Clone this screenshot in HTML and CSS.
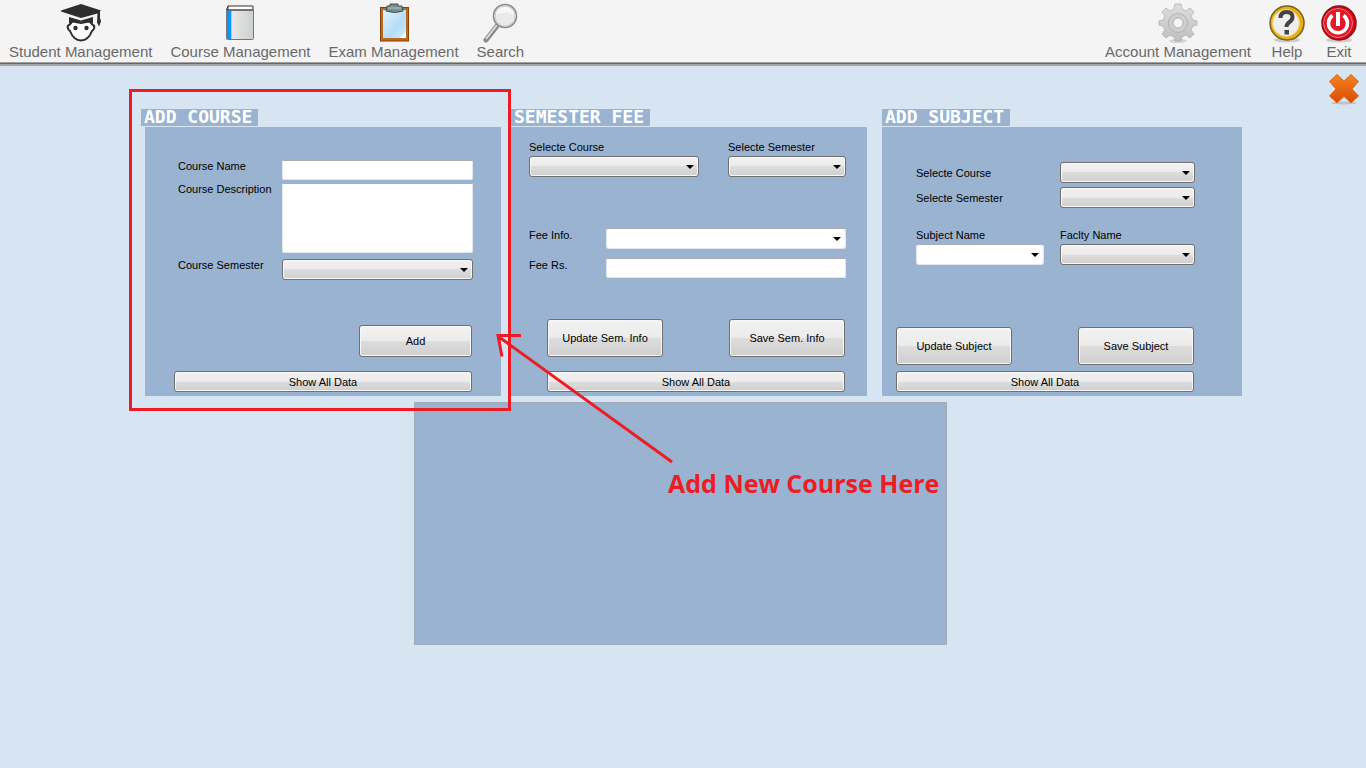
FILE: index.html
```html
<!DOCTYPE html>
<html lang="en">
<head>
<meta charset="utf-8">
<title>Course Management</title>
<link rel="stylesheet" href="styles.css">
</head>
<body>
<header class="toolbar">
  <nav class="tools">
    <button class="tool" type="button">
      <svg class="icon" viewBox="0 0 40 40">
        <path d="M0 7.500 20 1l20 6.500-1 1v6l1 4-2 5-2-4 .5-9L20 15 0 8.500z" fill="#2e2e2e"/>
        <path d="M8 14l12 3.500L32 14v6l-12-1.500L8 20z" fill="#2e2e2e"/>
        <path d="M12 18.500l8 1.500 8-1.500c2 0 2 3 4 3.500 2.500 1 1 5-1 6-2 5-6 9.500-11 9.500S11 33 9 28c-2-1-3.500-5-1-6 2-.5 2-3.500 4-3.500z" fill="#fff" stroke="#2e2e2e" stroke-width="2"/>
        <path d="M8 15v6l4-2.500 8 1.500 8-1.500 4 2.500v-6l-12 3.500z" fill="#2e2e2e"/>
        <circle cx="14.500" cy="25" r="2.200" fill="#2e2e2e"/><circle cx="25.500" cy="25" r="2.200" fill="#2e2e2e"/>
      </svg>
      <span>Student Management</span>
    </button>
    <button class="tool" type="button">
      <svg class="icon" viewBox="0 0 40 40">
        <defs><linearGradient id="cover"><stop offset="0" stop-color="#eee"/><stop offset="1" stop-color="#ccd0cf"/></linearGradient></defs>
        <path d="M8 3h25v6H8z" fill="#fff" stroke="#333"/>
        <rect x="6.500" y="7" width="27" height="29.500" rx="1" fill="url(#cover)" stroke="#777"/>
        <rect x="7" y="7.500" width="4" height="28.500" fill="#0a96fa"/>
        <path d="M11.500 8v28" stroke="#9bd2fa"/>
        <path d="M8 3 6.500 7 33 7" fill="none" stroke="#333"/>
      </svg>
      <span>Course Management</span>
    </button>
    <button class="tool" type="button">
      <svg class="icon" viewBox="0 0 40 40">
        <defs><linearGradient id="sheet" x2="1" y2="1"><stop offset="0" stop-color="#e3f3fe"/><stop offset=".6" stop-color="#b5dcf7"/><stop offset="1" stop-color="#d4ecfb"/></linearGradient></defs>
        <rect x="6.500" y="4.500" width="28" height="33.500" fill="#b96a1e" stroke="#80400b"/>
        <rect x="9" y="7" width="23" height="28" fill="url(#sheet)"/>
        <path d="M26 35l6-7v7z" fill="#fff"/>
        <path d="M16 3V1h8v2h4l1 5q-8 3-17 0l1-5z" fill="#78908d" stroke="#3d5352"/>
        <path d="M14 5h13" stroke="#b5c5c2"/>
      </svg>
      <span>Exam Management</span>
    </button>
    <button class="tool" type="button">
      <svg class="icon" viewBox="0 0 40 40">
        <path d="M6 37 17 23" stroke="#888" stroke-width="5" stroke-linecap="round"/>
        <path d="M6 36 17 22" stroke="#ddd" stroke-width="2"/>
        <circle cx="25" cy="13" r="11.500" fill="#e9e9e9" stroke="#888" stroke-width="1.500"/>
        <circle cx="25" cy="13" r="10" fill="none" stroke="#ccc"/>
        <path d="M16 12q9-5 18 0-1-8-9-8t-9 8z" fill="#f8f8f8"/>
      </svg>
      <span>Search</span>
    </button>
  </nav>
  <nav class="tools tools-end">
    <button class="tool" type="button">
      <svg class="icon" viewBox="0 0 40 40">
        <defs><linearGradient id="gear" x2="0" y2="1"><stop offset="0" stop-color="#dedede"/><stop offset="1" stop-color="#c0c0c0"/></linearGradient></defs>
        <ellipse cx="20" cy="38" rx="9" ry="2" fill="#d5d5d5"/>
        <path d="M17 1h6l1 5 4 2 4-3 4 4-3 4 2 4 4 1v4l-4 1-2 4 3 4-4 4-4-3-4 2-1 4h-6l-1-4-4-2-4 3-4-4 3-4-2-4-4-1v-4l4-1 2-4-3-4 4-4 4 3 4-2z" fill="url(#gear)" stroke="#aaa" stroke-width=".7"/>
        <circle cx="20" cy="20" r="9.500" fill="#cfcfcf" stroke="#b2b2b2"/>
        <circle cx="20" cy="20" r="5" fill="#f5f5f5" stroke="#999" stroke-width=".7"/>
      </svg>
      <span>Account Management</span>
    </button>
    <div class="tools-pair">
      <button class="tool" type="button">
        <svg class="icon" viewBox="0 0 40 40">
          <ellipse cx="20" cy="37" rx="13" ry="2.500" fill="#ccc"/>
          <circle cx="20" cy="20" r="17" fill="#e9ad17" stroke="#77601c" stroke-width="1.500"/>
          <circle cx="19" cy="20" r="13.500" fill="#eee" stroke="#fad35c"/>
          <path d="M13.500 15q0-6 6-6t6 5q0 3-3 5t-3 5" fill="none" stroke="#444" stroke-width="4"/>
          <rect x="17.500" y="27" width="4.500" height="4.500" fill="#444"/>
        </svg>
        <span>Help</span>
      </button>
      <button class="tool" type="button">
        <svg class="icon" viewBox="0 0 40 40">
          <ellipse cx="20" cy="37" rx="13" ry="2.500" fill="#ccc"/>
          <circle cx="20" cy="20" r="17" fill="#d90b18" stroke="#8f0d14" stroke-width="1.500"/>
          <circle cx="19" cy="20" r="14.500" fill="#df1b29" stroke="#f3747b"/>
          <path d="M13.500 12.500a9.500 9.500 0 1 0 11 0" fill="none" stroke="#fff" stroke-width="3.500"/>
          <path d="M19 9v14" stroke="#fff" stroke-width="4"/>
        </svg>
        <span>Exit</span>
      </button>
    </div>
  </nav>
</header>

<main class="workspace">
  <button class="close" type="button" aria-label="Close">
    <svg viewBox="0 0 32 32" width="32" height="32">
      <defs><linearGradient id="cross" x2="0" y2="1"><stop offset="0" stop-color="#f58220"/><stop offset="1" stop-color="#d94e00"/></linearGradient></defs>
      <ellipse cx="16" cy="30" rx="13" ry="1.500" fill="#b9c3cd"/>
      <path d="M9 1.500 16 8l7-6.500 7.500 7L24 16l6.500 7-7.500 7-7-6.500L9 30l-7.500-7L8 16 1.500 8.500z" fill="url(#cross)" stroke="#e0661a"/>
    </svg>
  </button>

  <div class="stage">
    <div class="sections">
      <section class="section course">
        <h2>ADD COURSE</h2>
        <form class="panel">
          <div class="fields">
            <label for="course-name">Course Name</label>
            <input id="course-name" type="text">
            <label for="course-desc">Course Description</label>
            <textarea id="course-desc"></textarea>
            <label class="spaced" for="course-sem">Course Semester</label>
            <span class="combo spaced"><select id="course-sem"></select></span>
          </div>
          <div class="actions">
            <button class="btn add" type="button">Add</button>
            <button class="btn wide" type="button">Show All Data</button>
          </div>
        </form>
      </section>

      <section class="section fee">
        <h2>SEMESTER FEE</h2>
        <form class="panel">
          <div class="pickers">
            <div class="stack"><label for="fee-course">Selecte Course</label>
              <span class="combo"><select id="fee-course"></select></span></div>
            <div class="stack"><label for="fee-sem">Selecte Semester</label>
              <span class="combo"><select id="fee-sem"></select></span></div>
          </div>
          <div class="fields">
            <label for="fee-info">Fee Info.</label>
            <span class="combo open"><select id="fee-info"></select></span>
            <label for="fee-rs">Fee Rs.</label>
            <input id="fee-rs" type="text">
          </div>
          <div class="actions">
            <div class="pair">
              <button class="btn" type="button">Update Sem. Info</button>
              <button class="btn" type="button">Save Sem. Info</button>
            </div>
            <button class="btn wide" type="button">Show All Data</button>
          </div>
        </form>
      </section>

      <section class="section subject">
        <h2>ADD SUBJECT</h2>
        <form class="panel">
          <div class="fields">
            <label for="sub-course">Selecte Course</label>
            <span class="combo"><select id="sub-course"></select></span>
            <label for="sub-sem">Selecte Semester</label>
            <span class="combo"><select id="sub-sem"></select></span>
          </div>
          <div class="pickers">
            <div class="stack"><label for="sub-name">Subject Name</label>
              <span class="combo open"><select id="sub-name"></select></span></div>
            <div class="stack"><label for="sub-faculty">Faclty Name</label>
              <span class="combo"><select id="sub-faculty"></select></span></div>
          </div>
          <div class="actions">
            <div class="pair">
              <button class="btn" type="button">Update Subject</button>
              <button class="btn" type="button">Save Subject</button>
            </div>
            <button class="btn wide" type="button">Show All Data</button>
          </div>
        </form>
      </section>
    </div>

    <div class="results"></div>

    <svg class="callout" width="560" height="400" viewBox="0 0 560 400" fill="none" stroke="#ed1c24" stroke-width="3">
      <path d="M6.500 .5h379v319h-379z"/>
      <path d="M548 372 375 247M397 245.500H374l4 21"/>
    </svg>
    <p class="callout-text">Add New Course Here</p>
  </div>
</main>
</body>
</html>
```
FILE: styles.css
```css
* { box-sizing: border-box; }

body {
  margin: 0;
  min-height: 100vh;
  background: #d7e4f2;
  font: 11px/14px "Liberation Sans", Arial, sans-serif;
  color: #000;
}

button, input, textarea, select { font: inherit; color: inherit; margin: 0; }

/* Toolbar */
.toolbar {
  display: flex;
  justify-content: space-between;
  padding: 3px 7px 2px 9px;
  background: #f4f4f4;
  border-bottom: 1px solid #a0a0a0;
  box-shadow: 0 1px #696969, 0 3px #a5a8ab;
}
.tools { display: flex; gap: 18px; }
.tools-end { gap: 16px; }
.tools-pair { display: flex; gap: 12px; }
.tool {
  display: flex;
  flex-direction: column;
  align-items: center;
  padding: 0;
  border: 0;
  background: none;
  font-size: 15px;
  line-height: 17px;
  color: #696969;
  white-space: nowrap;
}
.icon { width: 40px; height: 40px; }

/* Workspace */
.workspace { position: relative; padding-top: 27px; }
.close {
  position: absolute;
  top: 10px;
  right: 6px;
  padding: 0;
  border: 0;
  background: none;
  line-height: 0;
}
.stage { position: relative; max-width: 1118px; margin: 0 auto; padding-top: 19px; }
.sections {
  display: grid;
  grid-template-columns: 360fr 356fr 365fr;
  gap: 10px;
  padding-left: 17px;
}
.section { display: flex; flex-direction: column; align-items: flex-start; gap: 1px; }
.section h2 {
  margin: 0;
  padding: 0 6px 1px 3px;
  background: #99b3d0;
  color: #fff;
  font: bold 18px/16px "DejaVu Sans Mono", monospace;
}
.panel {
  display: flex;
  flex-direction: column;
  align-self: stretch;
  min-height: 269px;
  padding-bottom: 4px;
  background: #99b3d0;
}
.course .panel { margin-left: 4px; }
.subject { padding-left: 5px; }

/* Fields */
.fields { display: grid; align-items: start; }
.course .fields { grid-template-columns: 104px 1fr; row-gap: 3px; padding: 33px 28px 0 33px; }
.course label { line-height: 12px; }
.course .spaced { margin-top: 3px; }
.fee .pickers { grid-template-columns: 170fr 118fr; column-gap: 29px; padding: 13px 21px 0 18px; }
.fee .fields { grid-template-columns: 77px 1fr; row-gap: 9px; padding: 51px 21px 0 18px; }
.subject .fields { grid-template-columns: 144px 1fr; row-gap: 4px; padding: 35px 47px 0 34px; align-items: center; }
.subject .pickers { grid-template-columns: 128fr 135fr; column-gap: 16px; padding: 20px 47px 0 34px; }
.pickers { display: grid; }
.stack { display: flex; flex-direction: column; gap: 2px; }

input, textarea {
  display: block;
  width: 100%;
  height: 20px;
  padding: 2px;
  border: 1px solid #e2e6ee;
  border-top-color: #abadb3;
  border-radius: 2px;
  background: #fff;
}
textarea { height: 70px; resize: none; }

.combo { position: relative; display: block; }
.combo select {
  display: block;
  width: 100%;
  height: 21px;
  padding: 0 16px 0 4px;
  appearance: none;
}
.combo::after {
  content: "";
  position: absolute;
  top: 9px;
  right: 5px;
  border: 4px solid transparent;
  border-top-color: #000;
  border-bottom: 0;
  pointer-events: none;
}
.combo select, .btn {
  border: 1px solid #707070;
  border-radius: 3px;
  background: linear-gradient(#f2f2f2, #ebebeb 50%, #dddddd 50%, #cfcfcf);
  box-shadow: inset 0 0 0 1px #f8f8f8;
}
.combo.open select {
  border-color: #abadb3 #e2e6ee #e2e6ee;
  background: #fff;
  box-shadow: none;
}

/* Actions */
.actions { display: flex; flex-direction: column; margin-top: auto; }
.course .actions { padding: 0 29px; gap: 14px; }
.fee .actions { padding: 0 22px 0 36px; gap: 14px; }
.subject .actions { padding: 0 48px 0 14px; gap: 6px; }
.pair { display: flex; justify-content: space-between; }
.btn { width: 116px; height: 38px; padding: 0; }
.btn.add { width: 113px; height: 32px; align-self: flex-end; }
.btn.wide { width: 100%; height: 21px; }

.results {
  width: 533px;
  max-width: 100%;
  min-height: 243px;
  margin: 6px 0 0 290px;
  border: 1px solid #a5abb5;
  background: #99b3d0;
}

/* Annotation drawn over the forms */
.callout { position: absolute; left: 0; top: 0; overflow: visible; pointer-events: none; }
.callout-text {
  position: absolute;
  left: 544px;
  top: 377px;
  margin: 0;
  color: #ed1c24;
  font: bold 25px/32px "Open Sans", sans-serif;
  white-space: nowrap;
}
```
